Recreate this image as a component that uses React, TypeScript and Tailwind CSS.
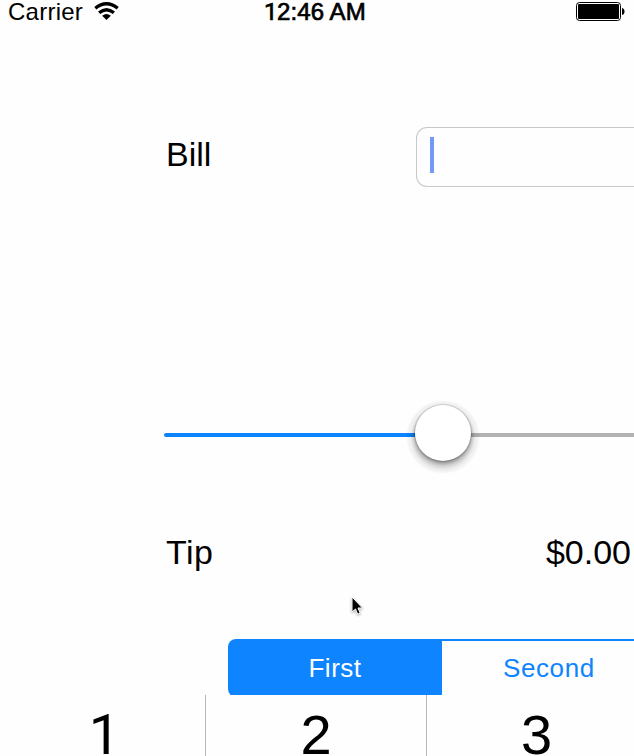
const font = "font-['Liberation_Sans',Arial,sans-serif]";

function StatusBar() {
  return (
    <header className="flex h-6 shrink-0 items-center justify-between pl-2 pr-[9px] text-[24px] leading-6">
      <div className="flex w-[256px] items-center">
        <span className="w-[86px] whitespace-nowrap tracking-[0.25px]">Carrier</span>
        <svg width="25" height="18" viewBox="0 0 25 18" className="-mt-0.5" fill="none" stroke="#000" strokeWidth="3.3">
          <path d="M1.3 6.2Q12.5 -2.8 23.7 6.2" />
          <path d="M5.1 10.8Q12.5 4.6 19.9 10.8" />
          <path d="M8.2 13.8Q12.5 10 16.8 13.8L12.5 18Z" fill="#000" stroke="none" />
        </svg>
      </div>
      <span className="flex flex-1 whitespace-nowrap [-webkit-text-stroke:0.7px_#000]">
        <span className="w-[13px] font-['Roboto',sans-serif]">1</span>
        <span className="tracking-[0.1px]">2:46 AM</span>
      </span>
      <svg width="50" height="20" viewBox="0 0 50 20">
        <rect x="1.5" y="0.5" width="44" height="18" rx="3" fill="#fff" stroke="#000" />
        <rect x="3" y="2" width="41" height="15" rx="1" />
        <path d="M47 6Q49.5 6.5 49.5 9.5Q49.5 12.5 47 13Z" />
      </svg>
    </header>
  );
}

function TipSlider() {
  return (
    <div className="mt-[218px] flex h-[60px] shrink-0 items-center pl-[164px]">
      <div className="h-1 w-[251px] rounded-l-full bg-[#0d84ff]" />
      <div className="relative -mt-1 size-14 shrink-0 rounded-full bg-white shadow-[0_0_1px_1px_rgba(0,0,0,0.14),0_3px_4px_rgba(0,0,0,0.38),0_5px_3px_3px_rgba(0,0,0,0.08),0_4px_2px_8px_rgba(0,0,0,0.05)]" />
      <div className="h-1 flex-1 bg-[#b2b2b2]" />
    </div>
  );
}

function Keypad() {
  return (
    <div className="relative -ml-[15px] -mt-0.5 flex h-[61px] shrink-0 bg-[#fefefe] text-[56px] leading-[60px]">
      <div className="w-[221px] shrink-0 border-r border-[#b4b5b9] pl-[19px] pt-[10px] text-center font-['Roboto',sans-serif]">1</div>
      <div className="w-[221px] shrink-0 border-r border-[#b4b5b9] pt-[10px] text-center">2</div>
      <div className="w-[219px] shrink-0 pt-[10px] text-center">3</div>
    </div>
  );
}

export default function App() {
  return (
    <main className={`${font} flex h-[756px] w-[634px] flex-col overflow-hidden bg-[#fefefe] text-black`}>
      <StatusBar />
      <div className="mt-[103px] flex h-[60px] shrink-0 pl-[166px] text-[34px]">
        <label className="w-[250px] leading-[54px]">Bill</label>
        <div className="flex-1 rounded-l-[11px] border border-r-0 border-[#c8c8c8] pl-[13px] pt-[9px]">
          <div className="h-9 w-1 bg-[#7299f5]" />
        </div>
      </div>
      <TipSlider />
      <div className="mt-[67px] flex h-10 shrink-0 justify-between pl-[166px] pr-[3px] text-[34px] leading-10">
        <span className="tracking-[0.5px]">Tip</span>
        <span>$0.00</span>
      </div>
      <div className="flex h-[67px] shrink-0 items-center pl-[351px] pt-[3px]">
        <svg width="14" height="22" viewBox="0 0 14 22" className="drop-shadow-[0_1px_1px_rgba(0,0,0,0.35)]">
          <path d="M1 1V16L4.5 13L6.7 18.2L9.2 17.1L7 12H11.5Z" stroke="#fff" />
        </svg>
      </div>
      <div className="ml-[228px] flex h-[58px] shrink-0 text-[26px] leading-[54px]">
        <div className="w-[214px] rounded-l-lg bg-[#0e84fe] pt-0.5 text-center tracking-[0.5px] text-white">First</div>
        <div className="flex-1 border-t-2 border-[#0e84fe] pl-[61px] tracking-[0.6px] text-[#0e84fe]">Second</div>
      </div>
      <Keypad />
    </main>
  );
}
